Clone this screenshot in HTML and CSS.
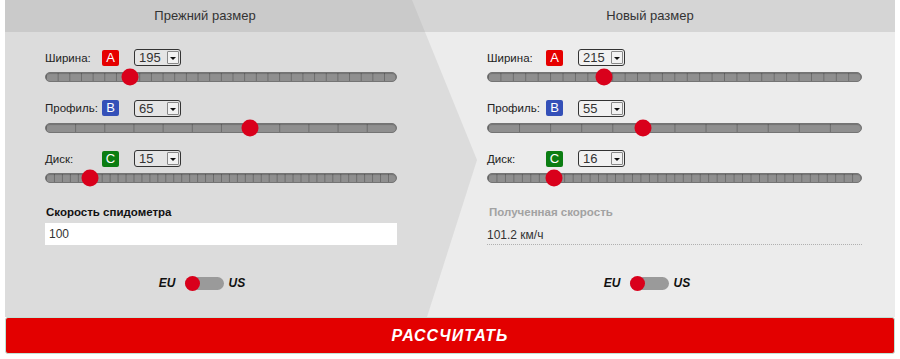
FILE: index.html
```html
<!DOCTYPE html>
<html lang="ru">
<head>
  <meta charset="UTF-8">
  <title>Шинный калькулятор</title>
  <link rel="stylesheet" href="styles.css">
</head>
<body>
  <div class="calc">
    <div class="panels">
      <section class="panel panel-old">
        <h2 class="panel-title">Прежний размер</h2>
        <div class="panel-fields">
          <div class="param">
            <div class="param-head">
              <span class="param-label">Ширина:</span>
              <span class="badge badge-a">A</span>
              <span class="select"><span class="select-value">195</span><span class="select-arrow"></span></span>
            </div>
            <div class="slider ticks-30"><span class="thumb" style="left: 24%"></span></div>
          </div>
          <div class="param">
            <div class="param-head">
              <span class="param-label">Профиль:</span>
              <span class="badge badge-b">B</span>
              <span class="select"><span class="select-value">65</span><span class="select-arrow"></span></span>
            </div>
            <div class="slider ticks-12"><span class="thumb" style="left: 58.2%"></span></div>
          </div>
          <div class="param">
            <div class="param-head">
              <span class="param-label">Диск:</span>
              <span class="badge badge-c">C</span>
              <span class="select"><span class="select-value">15</span><span class="select-arrow"></span></span>
            </div>
            <div class="slider ticks-44"><span class="thumb" style="left: 12.5%"></span></div>
          </div>

          <div class="speed">
            <div class="speed-label">Скорость спидометра</div>
            <input class="speed-input" type="text" value="100">
          </div>
        </div>
        <div class="units">
          <span class="unit">EU</span>
          <span class="toggle"><span class="toggle-thumb"></span></span>
          <span class="unit">US</span>
        </div>
      </section>

      <section class="panel panel-new">
        <h2 class="panel-title">Новый размер</h2>
        <div class="panel-fields">
          <div class="param">
            <div class="param-head">
              <span class="param-label">Ширина:</span>
              <span class="badge badge-a">A</span>
              <span class="select"><span class="select-value">215</span><span class="select-arrow"></span></span>
            </div>
            <div class="slider ticks-30"><span class="thumb" style="left: 31%"></span></div>
          </div>
          <div class="param">
            <div class="param-head">
              <span class="param-label">Профиль:</span>
              <span class="badge badge-b">B</span>
              <span class="select"><span class="select-value">55</span><span class="select-arrow"></span></span>
            </div>
            <div class="slider ticks-12"><span class="thumb" style="left: 41.6%"></span></div>
          </div>
          <div class="param">
            <div class="param-head">
              <span class="param-label">Диск:</span>
              <span class="badge badge-c">C</span>
              <span class="select"><span class="select-value">16</span><span class="select-arrow"></span></span>
            </div>
            <div class="slider ticks-44"><span class="thumb" style="left: 17.6%"></span></div>
          </div>

          <div class="speed">
            <div class="speed-label speed-label-muted">Полученная скорость</div>
            <div class="speed-result">101.2 км/ч</div>
          </div>
        </div>
        <div class="units">
          <span class="unit">EU</span>
          <span class="toggle"><span class="toggle-thumb"></span></span>
          <span class="unit">US</span>
        </div>
      </section>
    </div>

    <button class="calc-btn" type="button">РАССЧИТАТЬ</button>
  </div>
</body>
</html>
```

FILE: styles.css
```css
body {
  margin: 0;
  background: #fff;
  font-family: "Liberation Sans", Arial, sans-serif;
  color: #222;
}

.calc {
  width: 890px;
  margin-left: 5px;
}

/* two columns, the old one is drawn as an arrow over the new one */
.panels {
  position: relative;
  display: grid;
  grid-template-columns: 400px 490px;
  background: linear-gradient(#d5d5d5 0 32px, #ececec 32px);
}

.panels::before {
  content: "";
  position: absolute;
  inset: 0;
  background: linear-gradient(#cacaca 0 32px, #dcdcdc 32px);
  clip-path: polygon(0 0, 407px 0, 472px 160px, 422px 100%, 0 100%);
}

.panel {
  position: relative;
  z-index: 1;
}

.panel-title {
  margin: 0;
  height: 32px;
  line-height: 32px;
  text-align: center;
  font-size: 13px;
  font-weight: normal;
  color: #333;
}

.panel-fields {
  padding: 17px 8px 0 40px;
}

.panel-new .panel-fields {
  padding: 17px 33px 0 82px;
}

.param + .param {
  margin-top: 17.5px;
}

.param-head {
  display: flex;
  align-items: center;
  height: 17px;
}

.param-label {
  flex: none;
  width: 57px;
  font-size: 11.5px;
  color: #222;
}

.panel-new .param-label {
  width: 59px;
}

.badge {
  flex: none;
  width: 17px;
  height: 16px;
  line-height: 16px;
  margin-right: 15px;
  border-radius: 2px;
  text-align: center;
  font-size: 13px;
  color: #fff;
}

.badge-a { background: #e60000; }
.badge-b { background: #3450b8; }
.badge-c { background: #0b7d12; }

.select {
  display: flex;
  flex: none;
  box-sizing: border-box;
  width: 47px;
  height: 17px;
  border: 1px solid #333;
  border-radius: 3px;
  background: rgba(255, 255, 255, 0.25);
}

.select-value {
  flex: 1;
  padding-left: 4px;
  font-size: 13px;
  line-height: 15px;
  color: #333;
}

.select-arrow {
  position: relative;
  width: 10px;
  margin: 1px;
  border: 1px solid #888;
  border-radius: 1px;
  background: #f2f2f2;
}

.select-arrow::after {
  content: "";
  position: absolute;
  left: 2px;
  top: 5px;
  border-left: 3px solid transparent;
  border-right: 3px solid transparent;
  border-top: 3px solid #111;
}

/* slider track with tick marks */
.slider {
  position: relative;
  height: 8px;
  margin-top: 6px;
  border: 1px solid #747474;
  border-radius: 6px;
  background-color: #8f8f8f;
  background-image: linear-gradient(to right, #6c6c6c 0 1px, transparent 1px);
  box-shadow: inset 0 1px 1px rgba(0, 0, 0, 0.2);
}

.ticks-30 { background-size: calc(100% / 30) 100%; }
.ticks-12 { background-size: calc(100% / 12) 100%; }
.ticks-44 { background-size: calc(100% / 44) 100%; }

.thumb {
  position: absolute;
  top: 50%;
  width: 17px;
  height: 17px;
  border-radius: 50%;
  background: #d9001b;
  transform: translate(-50%, -50%);
}

.speed {
  margin-top: 22px;
}

.speed-label {
  font-size: 11.5px;
  font-weight: bold;
  line-height: 14px;
  margin-bottom: 4px;
  padding-left: 1px;
  color: #111;
}

.speed-label-muted {
  padding-left: 2px;
  color: #a2a2a2;
}

.speed-input {
  display: block;
  box-sizing: border-box;
  width: 100%;
  height: 22px;
  padding: 0 4px;
  border: 0;
  background: #fff;
  font-family: inherit;
  font-size: 12px;
  color: #333;
}

.speed-result {
  padding-top: 3px;
  line-height: 18px;
  font-size: 12px;
  color: #333;
  border-bottom: 1px dotted #b0b0b0;
}

.units {
  display: flex;
  justify-content: center;
  align-items: center;
  height: 18px;
  margin: 29px 0 25px;
  padding-right: 6px;
}

.unit {
  font-size: 12px;
  font-weight: bold;
  font-style: italic;
  color: #111;
}

.toggle {
  position: relative;
  width: 39px;
  height: 13px;
  margin: 0 5px 0 9px;
  border-radius: 7px;
  background: #9a9a9a;
}

.toggle-thumb {
  position: absolute;
  left: 0;
  top: -1px;
  width: 15px;
  height: 15px;
  border-radius: 50%;
  background: #d9001b;
}

.calc-btn {
  display: block;
  width: 100%;
  height: 37px;
  border: 1px solid #bfe2d6;
  border-radius: 3px;
  background: #e30000;
  color: #fff;
  font-family: inherit;
  font-size: 16px;
  font-weight: bold;
  font-style: italic;
  letter-spacing: 1px;
  cursor: pointer;
}
```
